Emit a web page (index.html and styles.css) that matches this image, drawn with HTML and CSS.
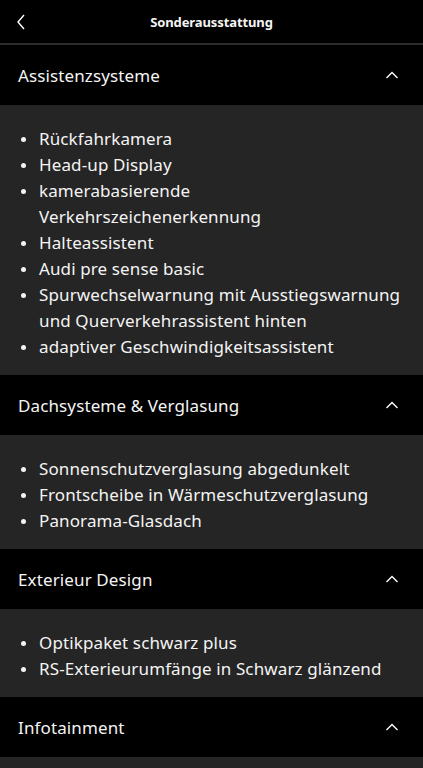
FILE: index.html
```html
<!DOCTYPE html>
<html lang="de">
<head>
<meta charset="utf-8">
<link rel="stylesheet" href="styles.css">
</head>
<body>
<header class="topbar">
  <svg class="back" width="10" height="16" viewBox="0 0 10 16"><path d="M8 1 L2 8 L8 15" fill="none" stroke="#fff" stroke-width="1.4"/></svg>
  <h1 class="title">Sonderausstattung</h1>
</header>
<section class="group">
  <div class="group-head"><span>Assistenzsysteme</span><svg class="chev" width="14" height="8" viewBox="0 0 14 8"><path d="M1.5 7 L7 1.5 L12.5 7" fill="none" stroke="#fff" stroke-width="1.4"/></svg></div>
  <ul class="items">
    <li>Rückfahrkamera</li>
    <li>Head-up Display</li>
    <li>kamerabasierende Verkehrszeichenerkennung</li>
    <li>Halteassistent</li>
    <li>Audi pre sense basic</li>
    <li>Spurwechselwarnung mit Ausstiegswarnung und Querverkehrassistent hinten</li>
    <li>adaptiver Geschwindigkeitsassistent</li>
  </ul>
</section>
<section class="group">
  <div class="group-head"><span>Dachsysteme &amp; Verglasung</span><svg class="chev" width="14" height="8" viewBox="0 0 14 8"><path d="M1.5 7 L7 1.5 L12.5 7" fill="none" stroke="#fff" stroke-width="1.4"/></svg></div>
  <ul class="items">
    <li>Sonnenschutzverglasung abgedunkelt</li>
    <li>Frontscheibe in Wärmeschutzverglasung</li>
    <li>Panorama-Glasdach</li>
  </ul>
</section>
<section class="group">
  <div class="group-head"><span>Exterieur Design</span><svg class="chev" width="14" height="8" viewBox="0 0 14 8"><path d="M1.5 7 L7 1.5 L12.5 7" fill="none" stroke="#fff" stroke-width="1.4"/></svg></div>
  <ul class="items">
    <li>Optikpaket schwarz plus</li>
    <li>RS-Exterieurumfänge in Schwarz glänzend</li>
  </ul>
</section>
<section class="group">
  <div class="group-head"><span>Infotainment</span><svg class="chev" width="14" height="8" viewBox="0 0 14 8"><path d="M1.5 7 L7 1.5 L12.5 7" fill="none" stroke="#fff" stroke-width="1.4"/></svg></div>
  <div class="items items-empty"></div>
</section>
</body>
</html>
```
FILE: styles.css
```css
html, body {
  margin: 0;
  padding: 0;
  background: #000;
  color: #f4f4f4;
  font-family: "Noto Sans", "Open Sans", sans-serif;
}
body {
  height: 768px;
  overflow: hidden;
}
.topbar {
  height: 43px;
  display: flex;
  align-items: center;
  justify-content: center;
  border-bottom: 2px solid #2c2c2c;
  position: relative;
}
.back {
  position: absolute;
  left: 16px;
  top: 14px;
}
.title {
  margin: 0;
  font-size: 13px;
  font-weight: 700;
  letter-spacing: -0.1px;
}
.group-head {
  height: 60px;
  display: flex;
  align-items: center;
  justify-content: space-between;
  padding: 0 24px 0 18px;
  font-size: 17px;
  letter-spacing: 0.12px;
}
.chev {
  display: block;
}
.items {
  margin: 0;
  list-style: none;
  background: #252525;
  padding: 21px 16px 15px 39px;
  font-size: 17px;
  line-height: 26px;
  letter-spacing: 0.12px;
}
.items-empty {
  height: 40px;
}
.items li {
  position: relative;
}
.items li::before {
  content: "";
  position: absolute;
  left: -18px;
  top: 11px;
  width: 5px;
  height: 5px;
  border-radius: 50%;
  background: #f4f4f4;
}
```
